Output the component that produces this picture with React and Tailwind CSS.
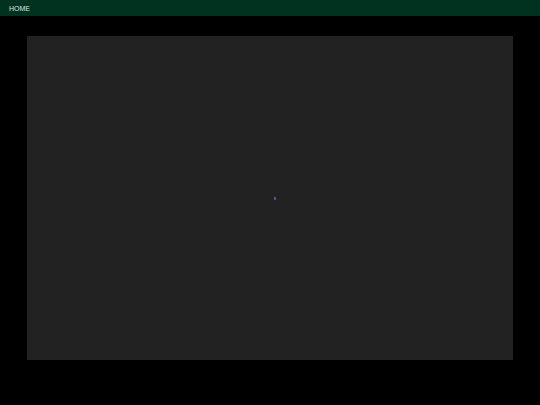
import React from 'react';

const App = () => {
  return (
    <div className="min-h-screen w-full bg-black" style={{ fontFamily: '"Liberation Sans", Arial, sans-serif' }}>
      <header className="h-4 bg-[#00331f] flex items-center px-[9px]">
        <span className="text-[7px] leading-none text-[#dde3e0]">HOME</span>
      </header>

      <main className="px-[27px] pt-5">
        <div className="h-[324px] w-full bg-[#222222] flex items-center justify-center">
          {/* loading dot */}
          <div className="ml-[10px] h-[3px] w-[2px] bg-[#4a5a80]" />
        </div>
      </main>
    </div>
  );
};

export default App;
